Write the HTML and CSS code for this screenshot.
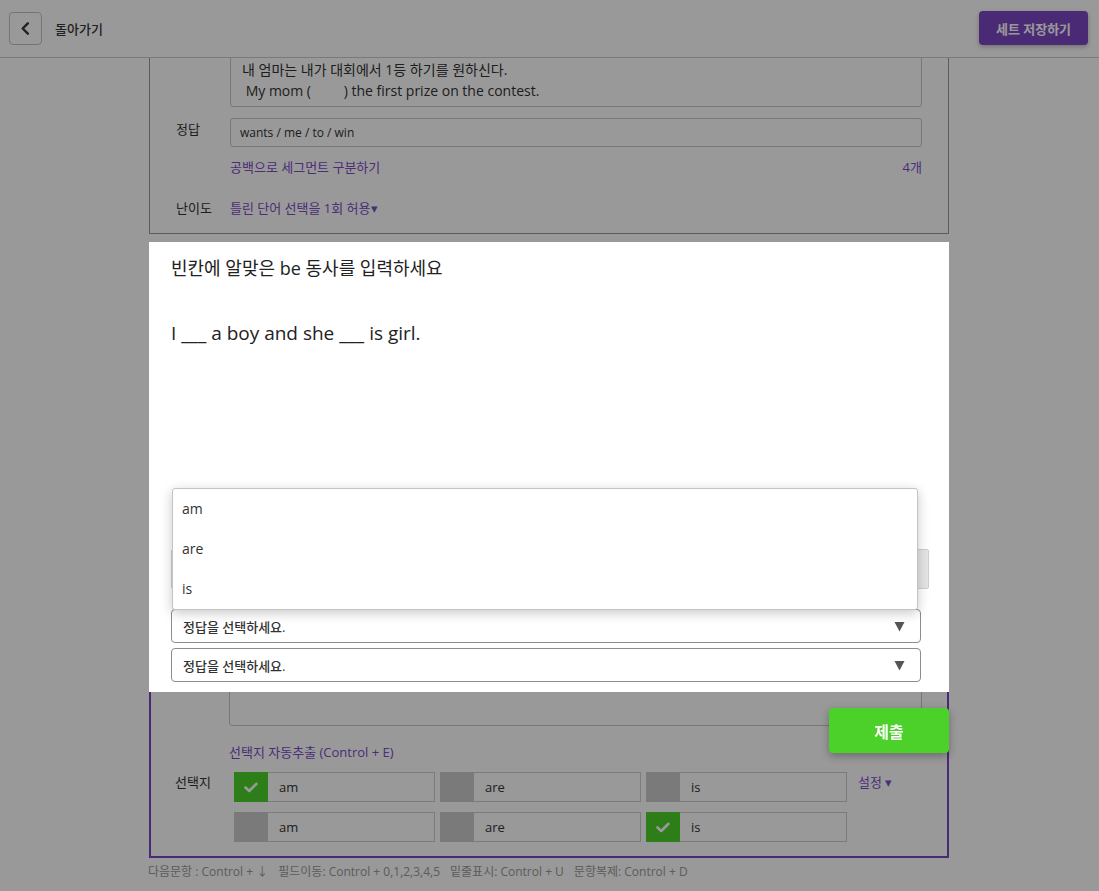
FILE: index.html
```html
<!DOCTYPE html>
<html lang="ko">
<head>
<meta charset="utf-8">
<title>문항 편집</title>
<link rel="stylesheet" href="styles.css">
</head>
<body>
<header class="topbar">
  <button class="back-btn" aria-label="뒤로">
    <svg width="33" height="33" viewBox="0 0 33 33"><path d="M19 11 L13.5 16.5 L19 22" fill="none" stroke="#3a3a3a" stroke-width="2.6" stroke-linecap="round" stroke-linejoin="round"/></svg>
  </button>
  <span class="back-label">돌아가기</span>
  <span class="spacer"></span>
  <button class="save-btn">세트 저장하기</button>
</header>

<main class="workspace">
  <section class="card card-first">
    <div class="field-row">
      <div class="field-label"></div>
      <div class="field-body">
        <div class="textbox question-box">내 엄마는 내가 대회에서 1등 하기를 원하신다.<br>&nbsp;My mom (&nbsp;&nbsp;&nbsp;&nbsp;&nbsp;&nbsp;&nbsp;&nbsp;&nbsp;) the first prize on the contest.</div>
      </div>
    </div>
    <div class="field-row row-answer">
      <div class="field-label">정답</div>
      <div class="field-body">
        <div class="textbox input-box">wants / me / to / win</div>
        <div class="hint-row"><span class="link">공백으로 세그먼트 구분하기</span><span class="link">4개</span></div>
      </div>
    </div>
    <div class="field-row row-level">
      <div class="field-label">난이도</div>
      <div class="field-body"><span class="link">틀린 단어 선택을 1회 허용▾</span></div>
    </div>
  </section>

  <section class="card card-active">
    <div class="field-row">
      <div class="field-label"></div>
      <div class="field-body"><div class="textbox passage-box"></div></div>
    </div>
    <div class="field-row row-extract">
      <div class="field-label"></div>
      <div class="field-body"><span class="link">선택지 자동추출 (Control + E)</span></div>
    </div>
    <div class="field-row row-choices">
      <div class="field-label">선택지</div>
      <div class="choice-grid">
        <div class="choice"><span class="mark on"><svg width="14" height="11" viewBox="0 0 14 11"><path d="M1.5 5.5 L5.2 9 L12.5 1.8" fill="none" stroke="#fff" stroke-width="2.6" stroke-linecap="round" stroke-linejoin="round"/></svg></span><span class="choice-text">am</span></div>
        <div class="choice"><span class="mark"></span><span class="choice-text">are</span></div>
        <div class="choice"><span class="mark"></span><span class="choice-text">is</span></div>
        <div class="choice"><span class="mark"></span><span class="choice-text">am</span></div>
        <div class="choice"><span class="mark"></span><span class="choice-text">are</span></div>
        <div class="choice"><span class="mark on"><svg width="14" height="11" viewBox="0 0 14 11"><path d="M1.5 5.5 L5.2 9 L12.5 1.8" fill="none" stroke="#fff" stroke-width="2.6" stroke-linecap="round" stroke-linejoin="round"/></svg></span><span class="choice-text">is</span></div>
      </div>
      <span class="link setting">설정 ▾</span>
    </div>
  </section>

  <p class="shortcuts"><span>다음문항 : Control + ↓</span><span>필드이동: Control + 0,1,2,3,4,5</span><span>밑줄표시: Control + U</span><span>문항복제: Control + D</span></p>
</main>

<div class="dim"></div>

<div class="modal">
  <h2 class="modal-title">빈칸에 알맞은 be 동사를 입력하세요</h2>
  <p class="modal-sentence">I ___ a boy and she ___ is girl.</p>
  <div class="modal-spacer"></div>
  <div class="answer-field"></div>
  <div class="select select-open">
    <span class="select-text">정답을 선택하세요.</span>
    <svg class="caret" width="11" height="11" viewBox="0 0 11 11"><path d="M0.5 1 H10.5 L5.5 10.5 Z" fill="#555"/></svg>
    <ul class="options">
      <li>am</li>
      <li>are</li>
      <li>is</li>
    </ul>
  </div>
  <div class="select">
    <span class="select-text">정답을 선택하세요.</span>
    <svg class="caret" width="11" height="11" viewBox="0 0 11 11"><path d="M0.5 1 H10.5 L5.5 10.5 Z" fill="#555"/></svg>
  </div>
</div>

<button class="submit-btn">제출</button>
</body>
</html>
```

FILE: styles.css
```css
* { box-sizing: border-box; }

html, body {
  margin: 0;
  padding: 0;
  height: 100%;
}

body {
  background: #fff;
  overflow: hidden;
  font-family: "Open Sans", "Noto Sans CJK KR", sans-serif;
  color: #333;
  font-size: 13px;
}

button {
  font-family: inherit;
  cursor: pointer;
}

/* ---------- top bar ---------- */
.topbar {
  height: 58px;
  border-bottom: 1px solid #ccc;
  display: flex;
  align-items: center;
  padding: 0 11px 1px 9px;
  background: #fff;
  position: relative;
  z-index: 2;
}

.back-btn {
  width: 33px;
  height: 33px;
  padding: 0;
  border: 1px solid #c4c4c4;
  border-radius: 4px;
  background: #fff;
  display: flex;
  align-items: center;
  justify-content: center;
}

.back-btn svg { display: block; }

.back-label {
  margin-left: 13px;
  font-size: 13px;
  font-weight: 500;
  color: #383838;
}

.spacer { flex: 1; }

.save-btn {
  width: 109px;
  height: 34px;
  border: none;
  border-radius: 4px;
  background: #7c47c4;
  color: #fff;
  font-size: 13px;
  font-weight: 700;
  box-shadow: 0 2px 5px rgba(0, 0, 0, 0.25);
}

/* ---------- workspace ---------- */
.workspace {
  height: calc(100% - 58px);
  overflow: hidden;
  padding-left: 149px;
}

.card {
  width: 800px;
  background: #fff;
  padding: 0 26px;
}

.card-first {
  margin-top: -26px;
  border: 1px solid #999;
  padding-top: 20px;
  padding-bottom: 15px;
}

.card-active {
  margin-top: 10px;
  border: 2px solid #7c47c4;
  padding-top: 20px;
  padding-bottom: 14px;
  padding-left: 24px;
  padding-right: 25px;
}

.field-row {
  display: flex;
  align-items: flex-start;
}

.field-label {
  width: 54px;
  flex: none;
  padding-top: 1px;
  line-height: 20px;
  font-size: 13px;
  color: #333;
}

.field-body {
  flex: 1;
  min-width: 0;
}

.textbox {
  border: 1px solid #c8c8c8;
  border-radius: 3px;
  background: #fff;
  color: #333;
}

.question-box {
  padding: 5px 11px;
  line-height: 21px;
  font-size: 14px;
}

.row-answer { margin-top: 11px; }

.input-box {
  height: 29px;
  line-height: 27px;
  padding: 0 9px;
  font-size: 12px;
}

.hint-row {
  margin-top: 10px;
  display: flex;
  justify-content: space-between;
  line-height: 20px;
}

.link {
  color: #7d4cc8;
  font-size: 13px;
  line-height: 20px;
}

.row-level { margin-top: 21px; }
.row-level .field-label { padding-top: 0; }

.passage-box {
  height: 460px;
}

.row-extract { margin-top: 16px; }

.row-choices {
  margin-top: 10px;
}

.row-choices .field-label { padding-top: 0; }

.choice-grid {
  margin-left: 5px;
  display: grid;
  grid-template-columns: repeat(3, 201px);
  column-gap: 5px;
  row-gap: 10px;
}

.choice {
  height: 30px;
  border: 1px solid #cfcfcf;
  background: #fff;
  display: flex;
  align-items: stretch;
}

.mark {
  width: 34px;
  flex: none;
  background: #ccc;
  display: flex;
  align-items: center;
  justify-content: center;
  margin: -1px 0 -1px -1px;
}

.mark.on { background: #4cd02a; }

.choice-text {
  padding-left: 11px;
  line-height: 28px;
  font-size: 13px;
  color: #333;
}

.setting { margin-left: 11px; }

.shortcuts {
  margin: 4px 0 0 -1px;
  line-height: 20px;
  font-size: 12px;
  color: #999;
  display: flex;
  gap: 10px;
}

/* ---------- dim + modal ---------- */
.dim {
  position: fixed;
  inset: 0;
  background: rgba(0, 0, 0, 0.4);
  z-index: 5;
}

.modal {
  position: fixed;
  top: 242px;
  left: 149px;
  width: 800px;
  height: 450px;
  background: #fff;
  z-index: 10;
  display: flex;
  flex-direction: column;
  padding: 14px 28px 10px 22px;
}

.modal-title {
  margin: 0;
  font-size: 18px;
  line-height: 24px;
  font-weight: 400;
  color: #222;
}

.modal-sentence {
  margin: 40px 0 0;
  font-size: 19px;
  line-height: 26px;
  color: #222;
}

.modal-spacer { flex: 1; }

.answer-field {
  height: 40px;
  margin-right: -8px;
  border: 1px solid #cfcfcf;
  background: #e4e4e4;
  border-radius: 2px;
}

.select {
  position: relative;
  height: 34px;
  margin-top: 5px;
  border: 1px solid #8c8c8c;
  border-radius: 4px;
  display: flex;
  align-items: center;
  padding: 0 15px 0 11px;
  background: #fff;
}

.select-open { margin-top: 20px; }

.select-text {
  flex: 1;
  font-size: 13px;
  font-weight: 500;
  color: #333;
}

.caret { display: block; }

.options {
  position: absolute;
  left: 0;
  right: 2px;
  bottom: 100%;
  margin: 0;
  padding: 0;
  list-style: none;
  background: #fff;
  border: 1px solid #c4c4c4;
  border-radius: 3px;
  box-shadow: 0 3px 12px rgba(0, 0, 0, 0.22);
}

.options li {
  height: 40px;
  line-height: 40px;
  padding-left: 9px;
  font-size: 14px;
  color: #333;
}

.submit-btn {
  position: fixed;
  left: 829px;
  top: 708px;
  width: 120px;
  height: 45px;
  border: none;
  border-radius: 4px;
  background: #4cd02a;
  color: #fff;
  font-size: 16px;
  font-weight: 700;
  z-index: 10;
  box-shadow: 0 3px 8px rgba(0, 0, 0, 0.3);
}
```
